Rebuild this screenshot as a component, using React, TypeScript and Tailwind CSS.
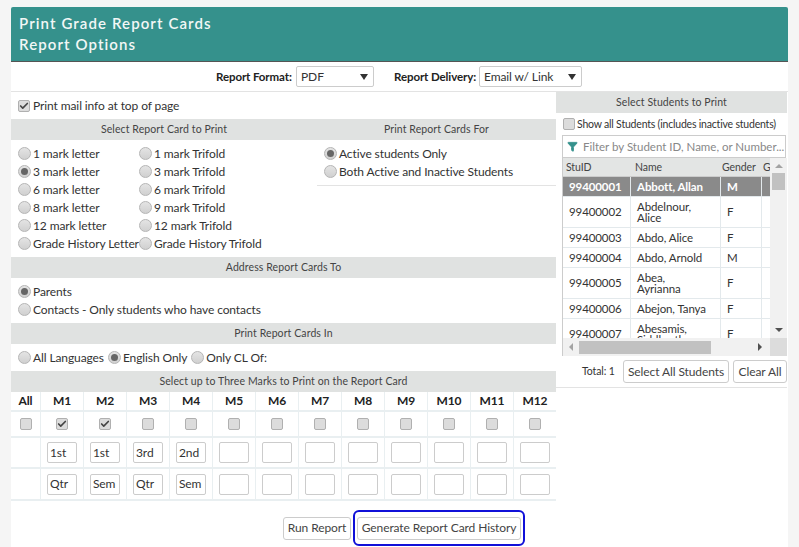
import { Check, Filter } from 'lucide-react';

const letters = ['1 mark letter', '3 mark letter', '6 mark letter', '8 mark letter', '12 mark letter', 'Grade History Letter'];
const trifolds = ['1 mark Trifold', '3 mark Trifold', '6 mark Trifold', '9 mark Trifold', '12 mark Trifold', 'Grade History Trifold'];
const marks = ['M1', 'M2', 'M3', 'M4', 'M5', 'M6', 'M7', 'M8', 'M9', 'M10', 'M11', 'M12'];
const line1 = ['1st', '1st', '3rd', '2nd', '', '', '', '', '', '', '', ''];
const line2 = ['Qtr', 'Sem', 'Qtr', 'Sem', '', '', '', '', '', '', '', ''];

const students = [
  { id: '99400001', name: 'Abbott, Allan', gender: 'M', h: 'h-[20px]' },
  { id: '99400002', name: 'Abdelnour, Alice', gender: 'F', h: 'h-[31px]' },
  { id: '99400003', name: 'Abdo, Alice', gender: 'F', h: 'h-[20px]' },
  { id: '99400004', name: 'Abdo, Arnold', gender: 'M', h: 'h-[20px]' },
  { id: '99400005', name: 'Abea, Ayrianna', gender: 'F', h: 'h-[31px]' },
  { id: '99400006', name: 'Abejon, Tanya', gender: 'F', h: 'h-[20px]' },
  { id: '99400007', name: 'Abesamis, Siddharth', gender: 'F', h: 'h-[31px]' },
];

function Radio({ label, on, className }: { label?: string; on?: boolean; className?: string }) {
  return (
    <label className={`flex items-center gap-[2px] whitespace-nowrap ${className ?? ''}`}>
      <span className="flex h-[13px] w-[13px] shrink-0 items-center justify-center rounded-full border border-[#b5b5b5] bg-gradient-to-b from-[#e4e4e4] to-[#d0d0d0]">
        {on && <span className="h-[7px] w-[7px] rounded-full bg-[#666]" />}
      </span>
      {label}
    </label>
  );
}

function CheckBox({ on }: { on?: boolean }) {
  return (
    <span className="flex h-[12px] w-[12px] shrink-0 items-center justify-center rounded-[2px] border border-[#b0b0b0] bg-[#dcdcdc]">
      {on && <Check size={10} strokeWidth={4} className="text-[#444]" />}
    </span>
  );
}

function SectionHead({ children, className }: { children: string; className?: string }) {
  return (
    <div className={`flex h-[21px] items-center justify-center bg-[#e0e2e1] text-[10.5px] tracking-[0.1px] text-[#444] ${className ?? ''}`}>
      {children}
    </div>
  );
}

function Select({ value, className }: { value: string; className: string }) {
  return (
    <div className={`flex h-[21px] items-center justify-between rounded-[2px] border border-[#ccc] bg-white pl-[4px] pr-[5px] text-[12px] text-[#333] ${className}`}>
      {value}
      <span className="h-0 w-0 border-x-[4px] border-t-[6px] border-x-transparent border-t-[#333]" />
    </div>
  );
}

function Cell({ children, first }: { children?: React.ReactNode; first?: boolean }) {
  return (
    <div className={`flex items-center justify-center border-b-2 border-[#e9eff1] ${first ? '' : 'border-l border-l-[#e9eff1]'}`}>
      {children}
    </div>
  );
}

function MarkInput({ value }: { value: string }) {
  return (
    <div className="flex h-[21px] w-[30px] items-center rounded-[2px] border border-[#ccc] bg-white pl-[2px] text-[12px] text-[#333]">
      {value}
    </div>
  );
}

function Button({ children, className }: { children: string; className: string }) {
  return (
    <button className={`flex h-[23px] items-center justify-center whitespace-nowrap rounded-[3px] border border-[#ccc] bg-white text-[12px] text-[#444] ${className}`}>
      {children}
    </button>
  );
}

export default function App() {
  return (
    <div className="h-[547px] w-[799px] overflow-hidden bg-[#f5f5f5] px-[11px] pt-[7px] font-['Lato',sans-serif] text-[12px] leading-none tracking-[-0.1px] text-[#333]">
      <div className="flex h-[55px] flex-col justify-center gap-[6px] rounded-t-[2px] border-b border-[#555] bg-[#35918c] pl-[8px] text-[15px] font-semibold tracking-[1.1px] text-[#f2f7f6]">
        <div>Print Grade Report Cards</div>
        <div>Report Options</div>
      </div>

      <div className="h-[485px] bg-white">
        <div className="flex h-[30px] items-center border-b border-[#e3e3e3] pl-[205px] text-[11.5px]">
          <span className="mr-[3px] w-[77px] whitespace-nowrap font-bold text-[#222]">Report Format:</span>
          <Select value="PDF" className="w-[78px]" />
          <span className="ml-[20px] mr-[3px] w-[82px] whitespace-nowrap font-bold text-[#222]">Report Delivery:</span>
          <Select value="Email w/ Link" className="w-[103px]" />
        </div>

        <div className="flex">
          <div className="w-[545px]">
            <div className="flex h-[27px] items-center gap-[3px] pl-[7px]">
              <CheckBox on />
              Print mail info at top of page
            </div>

            <div className="grid grid-cols-[306px_239px]">
              <div>
                <SectionHead>Select Report Card to Print</SectionHead>
                <div className="grid grid-cols-[121px_1fr] gap-y-[5px] pl-[7px] pt-[7px]">
                  {letters.map((l, i) => (
                    <div key={l} className="contents">
                      <Radio label={l} on={i === 1} className="h-[13px]" />
                      <Radio label={trifolds[i]} className="h-[13px]" />
                    </div>
                  ))}
                </div>
              </div>
              <div>
                <SectionHead>Print Report Cards For</SectionHead>
                <div className="flex h-[46px] flex-col gap-[5px] border-b border-[#e3e3e3] pl-[7px] pt-[7px]">
                  <Radio label="Active students Only" on className="h-[13px]" />
                  <Radio label="Both Active and Inactive Students" className="h-[13px]" />
                </div>
              </div>
            </div>

            <SectionHead className="mt-[7px]">Address Report Cards To</SectionHead>
            <div className="flex h-[45px] flex-col gap-[5px] pl-[7px] pt-[7px]">
              <Radio label="Parents" on className="h-[13px]" />
              <Radio label="Contacts - Only students who have contacts" className="h-[13px]" />
            </div>

            <SectionHead>Print Report Cards In</SectionHead>
            <div className="flex h-[27px] items-center gap-[4px] pl-[7px]">
              <Radio label="All Languages" />
              <Radio label="English Only" on />
              <Radio label="Only CL Of:" />
            </div>

            <SectionHead>Select up to Three Marks to Print on the Report Card</SectionHead>
            <div className="grid grid-cols-[29px_repeat(12,43px)] grid-rows-[20px_26px_31px_32px]">
              <Cell first><span className="font-bold text-[#222]">All</span></Cell>
              {marks.map(m => <Cell key={m}><span className="font-bold text-[#222]">{m}</span></Cell>)}
              <Cell first><CheckBox /></Cell>
              {marks.map((m, i) => <Cell key={m}><CheckBox on={i < 2} /></Cell>)}
              <Cell first />
              {line1.map((v, i) => <Cell key={i}><MarkInput value={v} /></Cell>)}
              <Cell first />
              {line2.map((v, i) => <Cell key={i}><MarkInput value={v} /></Cell>)}
            </div>
          </div>

          <div className="h-[296px] w-[231px] border-b border-[#e3e3e3]">
            <SectionHead>Select Students to Print</SectionHead>
            <div className="flex h-[22px] items-center gap-[2px] whitespace-nowrap pl-[7px] text-[10.5px] tracking-[-0.2px]">
              <CheckBox />
              Show all Students (includes inactive students)
            </div>
            <div className="ml-[6px] flex h-[23px] w-[224px] items-center gap-[5px] border border-[#ccc] pl-[4px] text-[#888]">
              <Filter size={11} className="shrink-0 fill-[#35918c] text-[#35918c]" />
              <span className="whitespace-nowrap text-[11.5px] tracking-[0px]">Filter by Student ID, Name, or Number...</span>
            </div>

            <div className="ml-[6px] w-[225px] border-l border-[#ccc]">
              <div className="flex h-[180px]">
                <div className="w-[208px] overflow-hidden text-[11.5px]">
                  <div className="grid h-[19px] grid-cols-[67px_90px_41px_10px] items-center border-b border-[#ccc] bg-[#e3e5e4] text-[10.5px] text-[#444]">
                    <span className="pl-[3px]">StuID</span>
                    <span className="pl-[5px]">Name</span>
                    <span className="pl-[2px]">Gender</span>
                    <span className="pl-[2px]">G</span>
                  </div>
                  {students.map((s, i) => (
                    <div
                      key={s.id}
                      className={`grid grid-cols-[67px_90px_41px_10px] items-center border-b border-[#e3e9ec] ${s.h} ${i === 0 ? 'bg-[#8a8a8a] font-bold text-white' : 'text-[#333]'}`}
                    >
                      <span className="flex h-full items-center pl-[6px]">{s.id}</span>
                      <span className="flex h-full items-center border-l border-[#e3e9ec] pl-[6px] pr-[12px] leading-[11px]">{s.name}</span>
                      <span className="flex h-full items-center border-l border-[#e3e9ec] pl-[6px]">{s.gender}</span>
                      <span className="h-full border-l border-[#e3e9ec]" />
                    </div>
                  ))}
                </div>
                <div className="flex w-[17px] flex-col items-center bg-[#f1f1f1] pt-[6px]">
                  <span className="h-0 w-0 border-x-[4px] border-b-[4px] border-x-transparent border-b-[#a3a3a3]" />
                  <span className="mt-[5px] h-[17px] w-[13px] bg-[#c1c1c1]" />
                  <span className="mt-auto mb-[6px] h-0 w-0 border-x-[4px] border-t-[4px] border-x-transparent border-t-[#505050]" />
                </div>
              </div>
              <div className="flex h-[18px] items-center bg-[#f1f1f1]">
                <span className="ml-[6px] h-0 w-0 border-y-[4px] border-r-[4px] border-y-transparent border-r-[#a3a3a3]" />
                <span className="ml-[6px] h-[13px] w-[132px] bg-[#c1c1c1]" />
                <span className="ml-[47px] h-0 w-0 border-y-[4px] border-l-[4px] border-y-transparent border-l-[#505050]" />
                <span className="ml-auto h-full w-[17px] bg-[#dcdcdc]" />
              </div>
            </div>

            <div className="mt-[4px] flex items-center pl-[26px]">
              <span className="w-[41px] text-[10.5px] text-[#333]">Total: 1</span>
              <Button className="w-[106px]">Select All Students</Button>
              <Button className="ml-[4px] w-[54px]">Clear All</Button>
            </div>
          </div>
        </div>

        <div className="flex items-center pl-[272px] pt-[9px]">
          <Button className="w-[68px]">Run Report</Button>
          <div className="ml-[2px] flex h-[36px] w-[172px] items-center justify-center rounded-[6px] border-2 border-[#1010d8]">
            <Button className="w-[164px]">Generate Report Card History</Button>
          </div>
        </div>
      </div>
    </div>
  );
}
